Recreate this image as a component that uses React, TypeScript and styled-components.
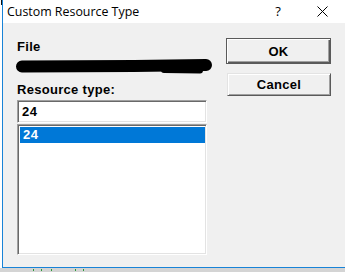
import { createGlobalStyle, styled } from "styled-components";

const GlobalStyle = createGlobalStyle`
  html, body {
    margin: 0;
    padding: 0;
    background: #ffffff;
  }
  body {
    font-family: "Liberation Sans", Arial, sans-serif;
  }
`;

const Screen = styled.div`
  width: 345px;
  height: 272px;
  display: flex;
  flex-direction: column;
  overflow: hidden;
`;

const TopArea = styled.div`
  display: flex;
  height: 268px;
`;

const Gutter = styled.div`
  width: 2px;
  background: #ffffff;

  span {
    display: block;
    width: 1px;
    height: 5px;
    margin-left: 1px;
    background: #111;
  }
`;

const Window = styled.div`
  flex: 1;
  display: flex;
  flex-direction: column;
  border-left: 1px solid #1883d7;
  border-bottom: 1px solid #1883d7;
  background: #f0f0f0;
`;

const TitleBar = styled.div`
  height: 23px;
  background: #ffffff;
  display: flex;
  align-items: center;
  padding-left: 4px;
  font-family: "Open Sans", "Noto Sans", sans-serif;
  font-size: 12.4px;
  color: #000;
`;

const TitleText = styled.span`
  line-height: 21px;
  padding-bottom: 1px;
`;

const TitleButtons = styled.div`
  margin-left: auto;
  display: flex;
  align-items: center;
  height: 100%;
`;

const HelpGlyph = styled.span`
  width: 46px;
  text-align: center;
  font-size: 13px;
  line-height: 21px;
  margin-right: -2px;
`;

const CloseButton = styled.span`
  width: 46px;
  display: flex;
  justify-content: center;
  padding-bottom: 1px;
`;

const Body = styled.div`
  flex: 1;
  display: flex;
  align-items: flex-start;
  padding: 15px 0 0 14px;
`;

const LeftColumn = styled.div`
  width: 190px;
  display: flex;
  flex-direction: column;
  margin-top: 1px;
`;

const Label = styled.div<{ $gap?: number }>`
  font-size: 13px;
  font-weight: bold;
  letter-spacing: 0.3px;
  line-height: 15px;
  color: #000;
  margin-top: ${(p) => p.$gap ?? 0}px;
`;

const Scribble = styled.svg`
  display: block;
  margin: 4px 0 0 -3px;
`;

const sunken = `
  box-sizing: border-box;
  border-style: solid;
  border-width: 1px;
  border-color: #a0a0a0 #ffffff #ffffff #a0a0a0;
  box-shadow: inset 1px 1px 0 #696969, inset -1px -1px 0 #e3e3e3;
  background: #ffffff;
`;

const TextBox = styled.div`
  ${sunken}
  height: 23px;
  margin-top: 3px;
  padding: 2px 0 0 4px;
  font-size: 13px;
  font-weight: bold;
  letter-spacing: 0.6px;
  line-height: 17px;
`;

const ListBox = styled.div`
  ${sunken}
  height: 131px;
  margin-top: 1px;
  padding: 2px 1px 2px 2px;
`;

const ListItem = styled.div<{ $selected?: boolean }>`
  height: 16px;
  padding-left: 3px;
  font-size: 13px;
  font-weight: bold;
  letter-spacing: 0.6px;
  line-height: 16px;
  color: ${(p) => (p.$selected ? "#ffffff" : "#000")};
  background: ${(p) => (p.$selected ? "#0078d7" : "transparent")};
`;

const RightColumn = styled.div`
  display: flex;
  flex-direction: column;
  margin-left: 20px;
  gap: 9px;
`;

const Button = styled.div<{ $default?: boolean }>`
  box-sizing: border-box;
  width: ${(p) => (p.$default ? 105 : 104)}px;
  height: ${(p) => (p.$default ? 26 : 23)}px;
  margin-left: ${(p) => (p.$default ? -1 : 0)}px;
  display: flex;
  align-items: center;
  justify-content: center;
  font-size: 13px;
  font-weight: bold;
  letter-spacing: 0.3px;
  color: #000;
  background: #f0f0f0;
  border: 1px solid ${(p) => (p.$default ? "#5a5a5a" : "#e3e3e3")};
  border-right-color: #5a5a5a;
  border-bottom-color: #5a5a5a;
  box-shadow: ${(p) =>
    p.$default
      ? "inset 1px 1px 0 #ffffff, inset -1px -1px 0 #5a5a5a, inset -2px -2px 0 #a0a0a0"
      : "inset 1px 1px 0 #ffffff, inset -1px -1px 0 #a0a0a0"};
`;

const BottomStrip = styled.div`
  height: 4px;
  background: #d4d4d4;
  display: flex;
  align-items: center;
`;

const Dot = styled.span<{ $at: number }>`
  width: 1px;
  height: 2px;
  background: #2a9a3a;
  margin-left: ${(p) => p.$at}px;
`;

export default function App() {
  return (
    <Screen>
      <GlobalStyle />
      <TopArea>
        <Gutter>
          <span />
        </Gutter>
        <Window>
          <TitleBar>
            <TitleText>Custom Resource Type</TitleText>
            <TitleButtons>
              <HelpGlyph>?</HelpGlyph>
              <CloseButton>
                <svg width="11" height="11" viewBox="0 0 11 11">
                  <path d="M0.5 0.5 L10.5 10.5 M10.5 0.5 L0.5 10.5" stroke="#000" strokeWidth="1" />
                </svg>
              </CloseButton>
            </TitleButtons>
          </TitleBar>
          <Body>
            <LeftColumn>
              <Label>File</Label>
              <Scribble width="202" height="18" viewBox="0 0 202 18">
                <defs>
                  <filter id="soft" filterUnits="userSpaceOnUse" x="0" y="0" width="202" height="18">
                    <feGaussianBlur stdDeviation="0.7" />
                  </filter>
                </defs>
                <g filter="url(#soft)" stroke="#000" strokeLinecap="round" fill="none">
                  <path d="M8 8.5 L120 8 L192 7" strokeWidth="12" />
                  <path d="M150 12 L186 12.5" strokeWidth="6" />
                </g>
              </Scribble>
              <Label $gap={6}>Resource type:</Label>
              <TextBox>24</TextBox>
              <ListBox>
                <ListItem $selected>24</ListItem>
              </ListBox>
            </LeftColumn>
            <RightColumn>
              <Button $default>OK</Button>
              <Button>Cancel</Button>
            </RightColumn>
          </Body>
        </Window>
      </TopArea>
      <BottomStrip>
        <Dot $at={33} />
        <Dot $at={7} />
        <Dot $at={9} />
        <Dot $at={23} />
        <Dot $at={7} />
      </BottomStrip>
    </Screen>
  );
}
